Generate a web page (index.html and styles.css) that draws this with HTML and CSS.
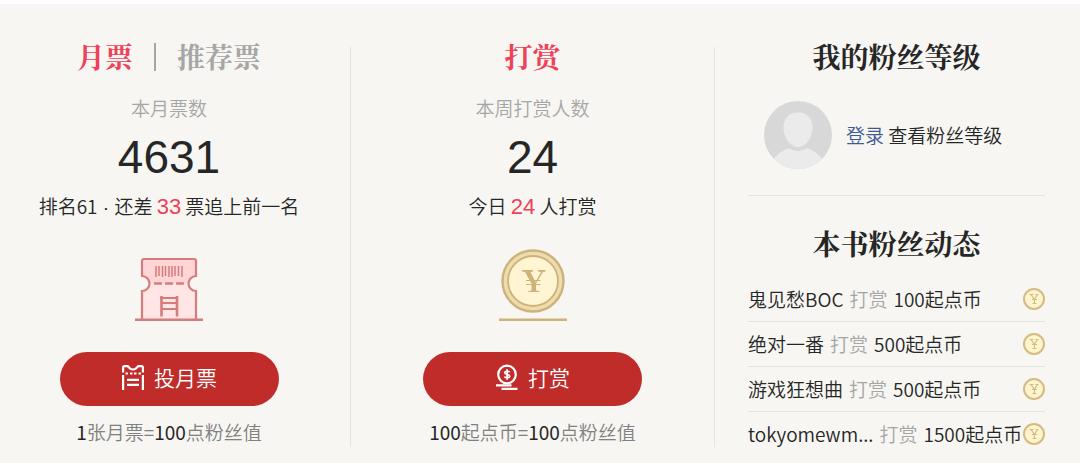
FILE: index.html
```html
<!DOCTYPE html>
<html lang="zh-CN">
<head>
    <meta charset="UTF-8">
    <meta name="viewport" content="width=device-width, initial-scale=1.0">
    <title>粉丝互动</title>
    <link rel="stylesheet" href="styles.css">
</head>
<body>
    <!-- 列表里共用的起点币图标 -->
    <svg class="defs" width="0" height="0" aria-hidden="true">
        <symbol id="coin" viewBox="0 0 22 22">
            <circle cx="11" cy="11" r="10" fill="#fff4d0" stroke="#d5bb80" stroke-width="2"/>
            <path d="M6.500 6.500h4M12.500 6.500h3M8 6.500l3.400 5v4M14.300 6.500l-2.900 5M9.500 15.500h4M9 11.500h5" fill="none" stroke="#d5bb80" stroke-width="1.200"/>
        </symbol>
    </svg>

    <div class="panel">
        <section class="column ticket">
            <div class="tabs">
                <button class="tab active">月票</button>
                <span class="bar"></span>
                <button class="tab">推荐票</button>
            </div>
            <p class="label">本月票数</p>
            <p class="number">4631</p>
            <p class="rank">排名61<span class="dot"> · </span>还差 <span class="red">33</span> 票追上前一名</p>
            <svg class="art" viewBox="0 0 68 72" aria-hidden="true">
                <path d="M9 10h50q2 0 2 2v15a7.500 7.500 0 0 0 0 15v28H7V42a7.500 7.500 0 0 0 0-15V12q0-2 2-2z" fill="#ffe5e5"/>
                <path d="M9 10h50q2 0 2 2v15q-6 2-6 7H13q0-5-6-7V12q0-2 2-2z" fill="#ffd5d5"/>
                <path d="M7 70V42a7.500 7.500 0 0 0 0-15V12q0-2 2-2h50q2 0 2 2v15a7.500 7.500 0 0 0 0 15v28" fill="none" stroke="#d67c7b" stroke-width="2.200"/>
                <path d="M21 17v11M24 17v10M27.500 17v11M30.500 17v10M34 17v11M37 17v11M40 17v10M43.500 17v10M47 17v11" stroke="#d67c7b" stroke-width="1.500"/>
                <path d="M20 34.500h6M31 34.500h6M42 34.500h6" stroke="#d67c7b" stroke-width="2.500" stroke-linecap="round"/>
                <path d="M25 49h18M27 54h15M27 60h15" fill="none" stroke="#d67c7b" stroke-width="1.800"/>
                <path d="M26.500 47v20.500M42 47v20.500" stroke="#d67c7b" stroke-width="2.600"/>
                <path d="M0 70.800h68" stroke="#d67c7b" stroke-width="2.400"/>
            </svg>
            <button class="button">
                <svg class="icon" viewBox="0 0 24 26" fill="none" stroke="#fff" stroke-width="2.200" aria-hidden="true">
                    <path d="M2.100 8.500V3.500q0-1.400 1.400-1.400h3.200l2.500 2.500q2.800 1.800 5.600 0l2.500-2.500h3.200q1.400 0 1.400 1.400v5M2.100 11v15M21.900 11v15"/>
                    <path d="M4.500 9.500h2.500M9 9.500h2.500M13 9.500h2.500M17.500 9.500h2.500M6 15.800h12M6 20.800h12"/>
                </svg>
                投月票
            </button>
            <p class="note"><b>1</b>张月票=<b>100</b>点粉丝值</p>
        </section>

        <section class="column reward">
            <h2 class="title red">打赏</h2>
            <p class="label">本周打赏人数</p>
            <p class="number">24</p>
            <p class="rank">今日 <span class="red">24</span> 人打赏</p>
            <svg class="art" viewBox="0 0 68 72" aria-hidden="true">
                <circle cx="34" cy="32" r="30.500" fill="#ecdcae" stroke="#cdb27a" stroke-width="2.400"/>
                <circle cx="34" cy="32" r="25" fill="#fff5d2" stroke="#cdb27a" stroke-width="1.800"/>
                <path d="M23 21h11v1.500l-2.500.5 5 10L42 23l-3-.5V21h7.500v1.500L44 23l-7 11.500v7l3.500.8V43H29v-.7l3.500-.8v-7L26 23l-3-.5z" fill="#cdb27a"/>
                <path d="M27 31.500h14.500M27 35.500h14.500" stroke="#cdb27a" stroke-width="1.200"/>
                <path d="M0 70.800h68" stroke="#cdb27a" stroke-width="2.400"/>
            </svg>
            <button class="button">
                <svg class="icon" viewBox="0 0 24 26" fill="none" stroke="#fff" stroke-width="2.200" aria-hidden="true">
                    <circle cx="12" cy="10.500" r="8.800"/>
                    <path d="M14.700 8.300c-.4-1.300-5-1.600-5 .5 0 2.200 5 1.200 5 3.500 0 2-4.500 2-5.200.2M12.100 5.300v10.400" stroke-width="1.700"/>
                    <path d="M1 21.400h15.500M6.500 24.800h16"/>
                </svg>
                打赏
            </button>
            <p class="note"><b>100</b>起点币=<b>100</b>点粉丝值</p>
        </section>

        <section class="column fans">
            <h2 class="title">我的粉丝等级</h2>
            <div class="login">
                <svg class="avatar" viewBox="0 0 68 68" aria-hidden="true">
                    <clipPath id="round"><circle cx="34" cy="34" r="34"/></clipPath>
                    <g clip-path="url(#round)">
                        <path d="M0 0h68v68H0z" fill="#d8d8d8"/>
                        <path d="M34 11.500c9 0 14.500 6 14.500 15C48.500 36 42 46 34 46s-14.500-10-14.500-19.500c0-9 5.500-15 14.500-15z" fill="#ebebeb"/>
                        <path d="M8 60q7-10 17-12.800 9 5.600 18 0Q53 50 60 60v8H8z" fill="#ebebeb"/>
                    </g>
                </svg>
                <p><a href="#">登录</a> 查看粉丝等级</p>
            </div>
            <h2 class="title">本书粉丝动态</h2>
            <ul class="list">
                <li>
                    <p class="event"><span>鬼见愁BOC</span><span class="action">打赏</span><span>100起点币</span></p>
                    <svg class="coin" aria-hidden="true"><use href="#coin"/></svg>
                </li>
                <li>
                    <p class="event"><span>绝对一番</span><span class="action">打赏</span><span>500起点币</span></p>
                    <svg class="coin" aria-hidden="true"><use href="#coin"/></svg>
                </li>
                <li>
                    <p class="event"><span>游戏狂想曲</span><span class="action">打赏</span><span>500起点币</span></p>
                    <svg class="coin" aria-hidden="true"><use href="#coin"/></svg>
                </li>
                <li>
                    <p class="event"><span>tokyomewm...</span><span class="action">打赏</span><span>1500起点币</span></p>
                    <svg class="coin" aria-hidden="true"><use href="#coin"/></svg>
                </li>
            </ul>
        </section>
    </div>
</body>
</html>
```
FILE: styles.css
```css
body {
    font-family: "Noto Sans CJK SC", sans-serif;
    font-size: 19px;
    line-height: 26px;
    font-weight: 350;
    color: #262626;
    background: #f7f6f2;
    margin: 0;
}
p, h2, ul {
    margin: 0;
    padding: 0;
}
button {
    font-family: inherit;
    border: none;
    cursor: pointer;
}
.defs {
    display: block;
}
.panel {
    display: grid;
    grid-template-columns: 351fr 364fr 365fr;
    padding: 43px 0 16px;
    border-top: 4px solid white;
}
.column {
    box-sizing: border-box;
    min-width: 0;
}
.ticket, .reward {
    display: flex;
    flex-direction: column;
    align-items: center;
    border-right: 1px solid #e3e2df;
}
.ticket {
    padding-right: 12px;
}
.fans {
    padding: 0 35px 0 33px;
}
.tabs {
    display: flex;
    align-items: center;
    gap: 21px;
    height: 20px;
}
.bar {
    width: 2px;
    height: 28px;
    background: #a6a6a6;
}
.tab, .title {
    font-family: "Noto Serif CJK SC", "Noto Sans CJK SC", serif;
    font-size: 28px;
    line-height: 18px;
    font-weight: 700;
    text-align: center;
}
.title {
    padding-bottom: 2px;
}
.tab {
    padding: 0 0 2px;
    background: none;
    color: #a6a6a6;
}
.tab.active, .red {
    color: #ed4259;
}
.label {
    margin-top: 28px;
    color: #a6a6a6;
}
.number {
    margin-top: 12px;
    font-family: "Liberation Sans", Arial, sans-serif;
    font-size: 46px;
    line-height: 48px;
    font-weight: 400;
}
.rank {
    margin-top: 12px;
    white-space: nowrap;
}
.rank .red, .dot {
    font-family: "Liberation Sans", Arial, sans-serif;
    font-weight: 400;
    line-height: 18px;
}
.rank .red {
    font-size: 22px;
}
.art {
    width: 68px;
    height: 72px;
    margin-top: 30px;
}
.button {
    display: flex;
    align-items: center;
    justify-content: center;
    gap: 9px;
    box-sizing: border-box;
    width: 219px;
    height: 54px;
    margin-top: 31px;
    padding: 0 0 4px;
    border-radius: 27px;
    background: #bf2c2a;
    color: white;
    font-size: 21px;
    font-weight: 350;
}
.icon {
    width: 24px;
    height: 26px;
}
.note {
    margin-top: 13px;
    color: #808080;
}
.note b {
    color: #262626;
    font-weight: 400;
}
.login {
    display: flex;
    align-items: center;
    gap: 14px;
    margin: 34px 0 38px;
    padding: 0 0 26px 16px;
    border-bottom: 1px solid #e3e2df;
}
.avatar {
    width: 68px;
    height: 68px;
}
.login a {
    color: #3f5a93;
    text-decoration: none;
}
.list {
    margin-top: 23px;
    list-style: none;
}
.list li {
    display: flex;
    align-items: center;
    justify-content: space-between;
    padding: 9px 0;
    border-bottom: 1px solid #e3e2df;
}
.list li:last-child {
    padding-bottom: 0;
    border-bottom: none;
}
.event {
    display: flex;
    gap: 6px;
    white-space: nowrap;
}
.action {
    color: #a6a6a6;
}
.coin {
    flex: none;
    width: 22px;
    height: 22px;
}
```
